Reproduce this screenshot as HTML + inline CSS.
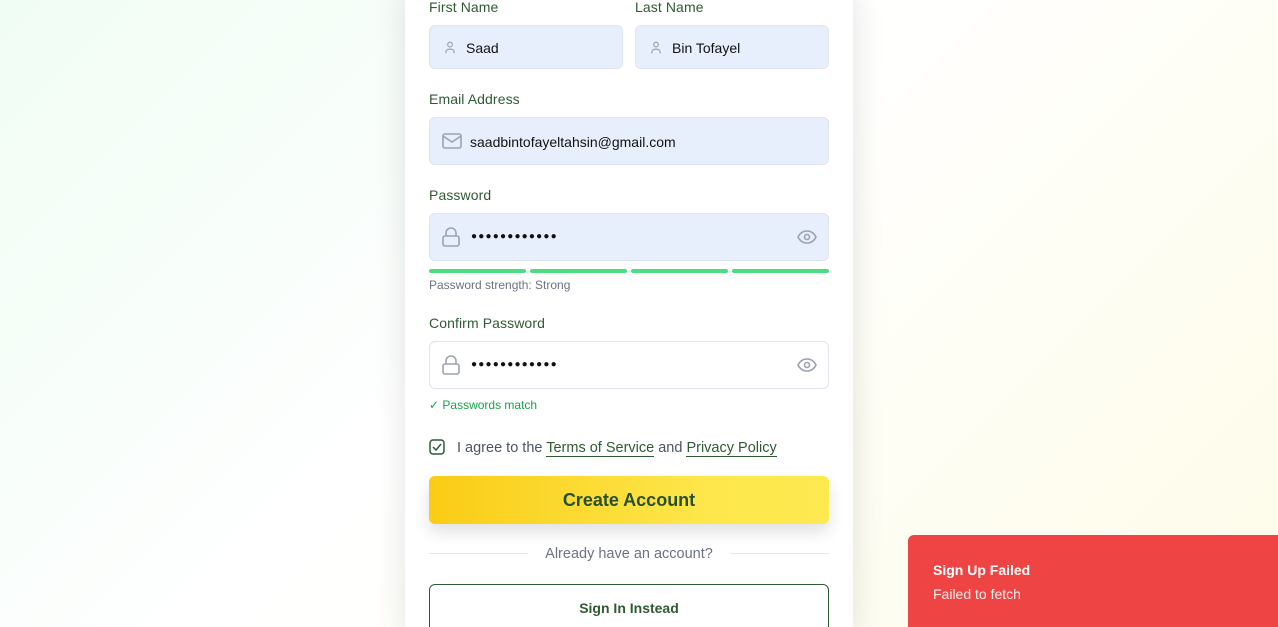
<!DOCTYPE html>
<html style="width:1278px;height:627px;overflow:hidden"><head><meta charset="utf-8"><style>
*{box-sizing:border-box;margin:0;padding:0}
body{width:1278px;height:627px;overflow:hidden;position:relative;font-family:"Liberation Sans",sans-serif;background:linear-gradient(135deg,#f0fdf4 0%,#ffffff 45%,#fefce8 100%)}
.card{position:absolute;left:405px;top:-20px;width:448px;height:647px;background:#fff;box-shadow:0 10px 30px rgba(0,0,0,.12)}
.lbl{position:absolute;font-size:14px;color:#2f5a33;font-weight:500;letter-spacing:.1px}
.inp{position:absolute;border:1px solid #dfe4ee;border-radius:6px;background:#e8effc;font-size:14px;color:#111}
.inp .t{position:absolute;top:0;line-height:inherit}
.dots{font-size:10px;letter-spacing:1.2px}
svg{position:absolute}
.bar{position:absolute;top:269px;height:4px;width:97px;background:#4ade80;border-radius:2px}
.small{position:absolute;font-size:12px}
</style></head><body>
<div class="card"></div>
<div class="lbl" style="left:429px;top:-1px">First Name</div>
<div class="lbl" style="left:635px;top:-1px">Last Name</div>
<div class="inp" style="left:429px;top:25px;width:194px;height:44px;line-height:44px">
<svg style="left:13px;top:14px" width="14" height="15" viewBox="0 0 24 24" fill="none" stroke="#9ca3af" stroke-width="2"><circle cx="12" cy="7" r="4"/><path d="M5 22v-2a5 5 0 0 1 5-5h4a5 5 0 0 1 5 5v2"/></svg>
<span class="t" style="left:36px">Saad</span></div>
<div class="inp" style="left:635px;top:25px;width:194px;height:44px;line-height:44px">
<svg style="left:13px;top:14px" width="14" height="15" viewBox="0 0 24 24" fill="none" stroke="#9ca3af" stroke-width="2"><circle cx="12" cy="7" r="4"/><path d="M5 22v-2a5 5 0 0 1 5-5h4a5 5 0 0 1 5 5v2"/></svg>
<span class="t" style="left:36px">Bin Tofayel</span></div>
<div class="lbl" style="left:429px;top:91px">Email Address</div>
<div class="inp" style="left:429px;top:117px;width:400px;height:48px;line-height:48px">
<svg style="left:12px;top:14px" width="20" height="18" viewBox="0 0 20 18" fill="none" stroke="#9ca3af" stroke-width="1.6"><rect x="1" y="2" width="18" height="14" rx="2"/><path d="M1 4l9 6 9-6"/></svg>
<span class="t" style="left:40px">saadbintofayeltahsin@gmail.com</span></div>
<div class="lbl" style="left:429px;top:187px">Password</div>
<div class="inp" style="left:429px;top:213px;width:400px;height:48px;line-height:46px">
<svg style="left:12px;top:13px" width="18" height="20" viewBox="0 0 18 20" fill="none" stroke="#9ca3af" stroke-width="1.6"><rect x="1" y="9" width="16" height="10" rx="2"/><path d="M4 9V6a5 5 0 0 1 10 0v3"/></svg>
<span class="t dots" style="left:41px">●●●●●●●●●●●●</span>
<svg style="left:367px;top:15px" width="20" height="16" viewBox="0 0 20 16" fill="none" stroke="#9ca3af" stroke-width="1.6"><path d="M1 8c2-4 5.5-6 9-6s7 2 9 6c-2 4-5.5 6-9 6S3 12 1 8z"/><circle cx="10" cy="8" r="2.5"/></svg></div>
<div class="bar" style="left:429px"></div><div class="bar" style="left:530px"></div><div class="bar" style="left:631px"></div><div class="bar" style="left:732px"></div>
<div class="small" style="left:429px;top:278px;color:#6b7280">Password strength: Strong</div>
<div class="lbl" style="left:429px;top:315px">Confirm Password</div>
<div class="inp" style="left:429px;top:341px;width:400px;height:48px;line-height:46px;background:#fff">
<svg style="left:12px;top:13px" width="18" height="20" viewBox="0 0 18 20" fill="none" stroke="#9ca3af" stroke-width="1.6"><rect x="1" y="9" width="16" height="10" rx="2"/><path d="M4 9V6a5 5 0 0 1 10 0v3"/></svg>
<span class="t dots" style="left:41px">●●●●●●●●●●●●</span>
<svg style="left:367px;top:15px" width="20" height="16" viewBox="0 0 20 16" fill="none" stroke="#9ca3af" stroke-width="1.6"><path d="M1 8c2-4 5.5-6 9-6s7 2 9 6c-2 4-5.5 6-9 6S3 12 1 8z"/><circle cx="10" cy="8" r="2.5"/></svg></div>
<div class="small" style="left:429px;top:398px;color:#16a34a">✓ Passwords match</div>
<svg style="left:429px;top:439px" width="16" height="16" viewBox="0 0 16 16" fill="none" stroke="#2f5a33" stroke-width="1.5"><rect x="1" y="1" width="14" height="14" rx="3"/><path d="M4 8l3 3 5-6"/></svg>
<div style="position:absolute;left:457px;top:440px;font-size:14.5px;color:#4b5563">I agree to the <span style="color:#2f5a33;border-bottom:1px solid #2f5a33">Terms of Service</span> and <span style="color:#2f5a33;border-bottom:1px solid #2f5a33">Privacy Policy</span></div>
<div style="position:absolute;left:429px;top:476px;width:400px;height:48px;border-radius:6px;background:linear-gradient(90deg,#facc15,#fde74c 70%,#fde950);box-shadow:0 8px 16px rgba(0,0,0,.12);text-align:center;line-height:48px;font-size:18px;font-weight:bold;color:#27502b">Create Account</div>
<div style="position:absolute;left:429px;top:553px;width:400px;height:1px;background:#e5e7eb"></div>
<div style="position:absolute;left:528px;top:544px;width:202px;height:20px;background:#fff;text-align:center;font-size:14.5px;color:#6b7280;line-height:20px">Already have an account?</div>
<div style="position:absolute;left:429px;top:584px;width:400px;height:60px;border:1px solid #2f5a33;border-radius:6px;text-align:center;padding-top:15px;font-size:14px;font-weight:bold;color:#2f5a33">Sign In Instead</div>
<div style="position:absolute;left:908px;top:535px;width:380px;height:100px;background:#ef4444;border-radius:6px;color:#fff;padding:27px 25px">
<div style="font-size:14px;font-weight:bold">Sign Up Failed</div>
<div style="font-size:14px;margin-top:8px;opacity:.9">Failed to fetch</div></div>
</body></html>
